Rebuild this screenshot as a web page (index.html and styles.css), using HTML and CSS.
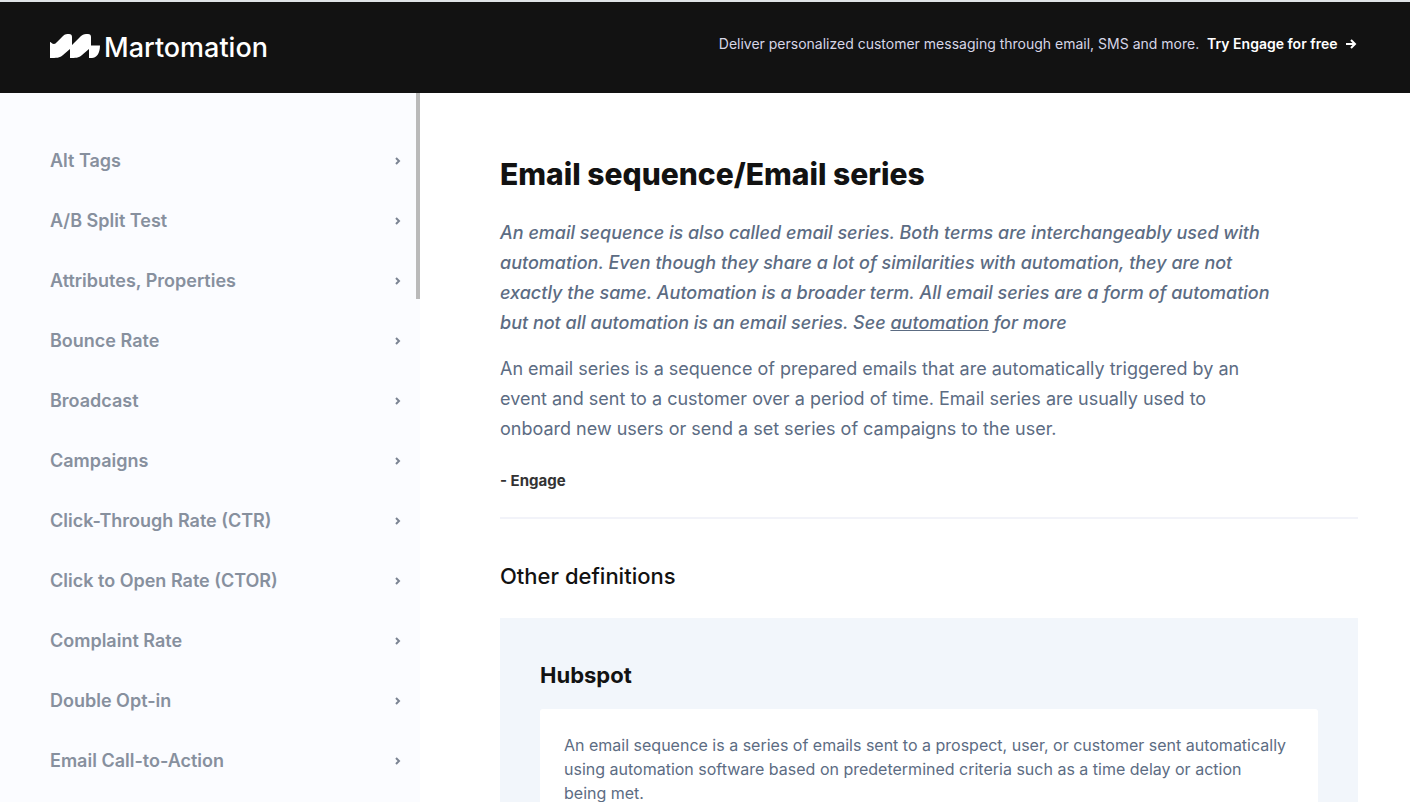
FILE: index.html
```html
<!DOCTYPE html>
<html lang="en">
<head>
<meta charset="utf-8">
<title>Email sequence/Email series - Martomation</title>
<link rel="stylesheet" href="styles.css">
</head>
<body>
<header class="header">
  <a class="logo" href="#">
    <svg class="logo-mark" viewBox="0 0 50 24" aria-hidden="true"><path fill="#fff" d="M0 8C1 8 2 10 4 10C5 10 6 9 7 8L13 2C15 0 17 0 19 0Q22 0 22 3V11L31 2C34 0 35 0 38 0Q41 0 41 3V11.500H50C50 20 46 24 42 24H39V15L32 21C29 24 25 24 20 24V15L13 21C10 24 6 24 0 24Z"/></svg>
    <span>Martomation</span>
  </a>
  <p class="promo">Deliver personalized customer messaging through email, SMS and more.
    <a class="promo-link" href="#">Try Engage for free
      <svg class="arrow" viewBox="0 0 12 12" aria-hidden="true"><path d="M1 6H10M6 2L10 6L6 10"/></svg></a>
  </p>
</header>
<div class="layout">
  <nav class="sidebar" aria-label="Glossary">
    <a class="term" href="#">Alt Tags<svg class="chevron" viewBox="0 0 6 8"><path d="M1 1L4 4L1 7"/></svg></a>
    <a class="term" href="#">A/B Split Test<svg class="chevron" viewBox="0 0 6 8"><path d="M1 1L4 4L1 7"/></svg></a>
    <a class="term" href="#">Attributes, Properties<svg class="chevron" viewBox="0 0 6 8"><path d="M1 1L4 4L1 7"/></svg></a>
    <a class="term" href="#">Bounce Rate<svg class="chevron" viewBox="0 0 6 8"><path d="M1 1L4 4L1 7"/></svg></a>
    <a class="term" href="#">Broadcast<svg class="chevron" viewBox="0 0 6 8"><path d="M1 1L4 4L1 7"/></svg></a>
    <a class="term" href="#">Campaigns<svg class="chevron" viewBox="0 0 6 8"><path d="M1 1L4 4L1 7"/></svg></a>
    <a class="term" href="#">Click-Through Rate (CTR)<svg class="chevron" viewBox="0 0 6 8"><path d="M1 1L4 4L1 7"/></svg></a>
    <a class="term" href="#">Click to Open Rate (CTOR)<svg class="chevron" viewBox="0 0 6 8"><path d="M1 1L4 4L1 7"/></svg></a>
    <a class="term" href="#">Complaint Rate<svg class="chevron" viewBox="0 0 6 8"><path d="M1 1L4 4L1 7"/></svg></a>
    <a class="term" href="#">Double Opt-in<svg class="chevron" viewBox="0 0 6 8"><path d="M1 1L4 4L1 7"/></svg></a>
    <a class="term" href="#">Email Call-to-Action<svg class="chevron" viewBox="0 0 6 8"><path d="M1 1L4 4L1 7"/></svg></a>
    <span class="scroll-thumb"></span>
  </nav>
  <main class="content">
    <h1 class="title">Email sequence/Email series</h1>
    <p class="text intro">An email sequence is also called email series. Both terms are interchangeably used with automation. Even though they share a lot of similarities with automation, they are not exactly the same. Automation is a broader term. All email series are a form of automation but not all automation is an email series. See <a class="inline-link" href="#">automation</a> for more</p>
    <p class="text">An email series is a sequence of prepared emails that are automatically triggered by an event and sent to a customer over a period of time. Email series are usually used to onboard new users or send a set series of campaigns to the user.</p>
    <p class="source">- Engage</p>
    <h2 class="subtitle">Other definitions</h2>
    <section class="panel">
      <h3 class="panel-title">Hubspot</h3>
      <p class="quote">An email sequence is a series of emails sent to a prospect, user, or customer sent automatically using automation software based on predetermined criteria such as a time delay or action being&nbsp;met.</p>
    </section>
  </main>
</div>
</body>
</html>
```
FILE: styles.css
```css
* { box-sizing: border-box; }
html, body { height: 100%; }
body {
  margin: 0;
  display: flex;
  flex-direction: column;
  overflow: hidden;
  background: #fff;
  color: #121212;
  font-family: Inter, sans-serif;
}
h1, h2, h3, p { margin: 0; }
a { color: inherit; text-decoration: none; }
.header {
  display: flex;
  flex: none;
  justify-content: space-between;
  align-items: flex-start;
  padding: 31px 53px 30px 50px;
  border-top: 2px solid #dfe3e6;
  background: #121212;
  color: #fff;
}
.logo {
  display: flex;
  align-items: flex-start;
  gap: 4px;
  font-size: 27px;
  font-weight: 500;
  line-height: 30px;
}
.logo-mark { width: 50px; height: 24px; margin-top: 1px; }
.promo { color: #d6d6e7; font-size: 14px; line-height: 22px; }
.promo-link { margin-left: 4px; color: #fff; font-weight: 600; }
.arrow {
  width: 12px;
  height: 12px;
  margin-left: 4px;
  vertical-align: -1px;
  fill: none;
  stroke: #fff;
  stroke-width: 2;
}
.layout { display: flex; flex: 1; min-height: 0; }
.sidebar {
  position: relative;
  flex: none;
  width: 420px;
  padding: 37px 19px 0 50px;
  overflow: hidden;
  background: #fbfcff;
}
.term {
  display: flex;
  align-items: center;
  justify-content: space-between;
  height: 60px;
  color: #87909e;
  font-size: 18px;
  font-weight: 600;
}
.chevron {
  width: 6px;
  height: 8px;
  margin-top: 2px;
  fill: none;
  stroke: #7b8493;
  stroke-width: 2;
}
.scroll-thumb {
  position: absolute;
  top: 0;
  right: 0;
  width: 4px;
  height: 206px;
  background: #bababa;
}
.content {
  flex: 1;
  padding: 60px 52px 0 80px;
  overflow: hidden;
}
.title { margin-bottom: 22px; font-size: 30px; font-weight: 800; line-height: 43px; }
.text {
  max-width: 770px;
  margin-bottom: 16px;
  color: #5c6c83;
  font-size: 18px;
  line-height: 30px;
}
.intro { font-style: italic; font-weight: 500; }
.inline-link { text-decoration: underline; }
.source {
  margin-bottom: 41px;
  padding: 9px 0 24px;
  border-bottom: 2px solid #f2f3f9;
  color: #333;
  font-size: 15px;
  font-weight: 700;
  line-height: 24px;
}
.subtitle { margin-bottom: 26px; font-size: 22px; font-weight: 500; line-height: 32px; }
.panel { padding: 40px; background: #f2f6fb; }
.panel-title { margin-bottom: 17px; font-size: 22px; font-weight: 700; line-height: 34px; }
.quote {
  padding: 24px;
  border-radius: 3px;
  background: #fff;
  color: #5c6c83;
  font-size: 16px;
  line-height: 24px;
}
```
